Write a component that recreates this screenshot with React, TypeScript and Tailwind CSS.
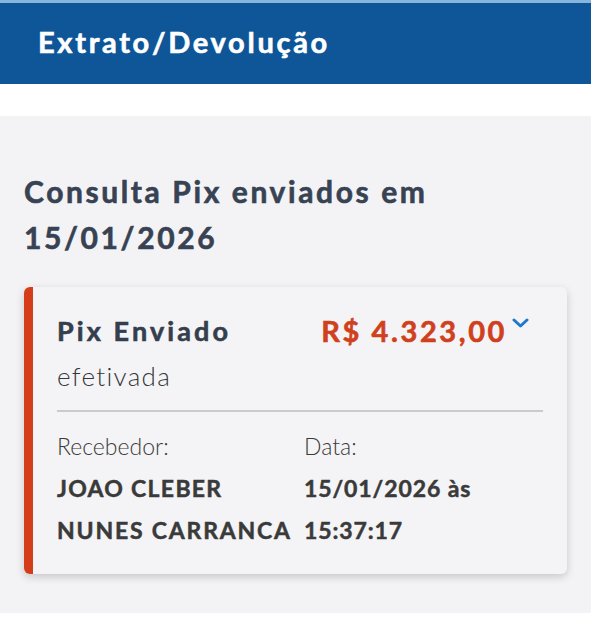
import React from "react";

export default function App() {
  return (
    <div className="w-[591px] h-[627px] bg-white overflow-hidden" style={{ fontFamily: "Lato, 'Open Sans', sans-serif" }}>
      <div className="h-[3px] bg-[#86b6dc]" />
      <div className="h-[81px] bg-[#0e5697] flex items-center px-[38px]">
        <h1 className="text-white font-bold text-[29px] leading-none tracking-[2.7px] -mt-[4px] [-webkit-text-stroke:0.6px_currentColor]">Extrato/Devolução</h1>
      </div>
      <div className="h-[32px] bg-white" />
      <div className="bg-[#f3f3f5] px-[24px] pt-[52px] pb-[39px]">
        <h2 className="text-[#374253] font-bold text-[30px] leading-[46px] tracking-[2.6px] [-webkit-text-stroke:0.6px_currentColor]">
          Consulta Pix enviados em
          <br />
          15/01/2026
        </h2>
        <div className="mt-[27px] w-[543px] rounded-[6px] border-l-[9px] border-[#d43c1a] bg-[#f4f4f6] shadow-[0_3px_8px_rgba(0,0,0,0.18)] pl-[24px] pr-[24px] pt-[26px] pb-[23px]">
          <div className="flex justify-between items-start">
            <span className="text-[#343e4d] font-bold text-[27px] leading-[36px] tracking-[3.1px] [-webkit-text-stroke:0.6px_currentColor]">Pix Enviado</span>
            <div className="flex items-start mr-[14px]">
              <span className="text-[#d0401c] font-bold text-[29px] leading-[36px] tracking-[2.6px] [-webkit-text-stroke:0.6px_currentColor]">R$ 4.323,00</span>
              <svg className="ml-[5px] mt-[5px]" width="17" height="11" viewBox="0 0 17 11">
                <path d="M2 2 L8.5 8 L15 2" fill="none" stroke="#1e78cc" strokeWidth="3" strokeLinecap="round" strokeLinejoin="round" />
              </svg>
            </div>
          </div>
          <div className="mt-[9px] text-[#363636] font-light text-[26px] leading-[36px] tracking-[1.3px]">efetivada</div>
          <div className="mt-[16px] h-[2px] bg-[#cbcbcd]" />
          <div className="mt-[16px] grid grid-cols-[247px_1fr] text-[#3a3a3a]">
            <div>
              <div className="font-light text-[23px] leading-[36px]">Recebedor:</div>
              <div className="font-bold text-[23px] leading-[42px] mt-[3px] [-webkit-text-stroke:0.5px_currentColor]">
                <div className="tracking-[1.3px]">JOAO CLEBER</div>
                <div className="tracking-[1.8px]">NUNES CARRANCA</div>
              </div>
            </div>
            <div>
              <div className="font-light text-[23px] leading-[36px]">Data:</div>
              <div className="font-bold text-[23px] leading-[42px] mt-[3px] tracking-[0.9px] [-webkit-text-stroke:0.5px_currentColor]">
                <div>15/01/2026 às</div>
                <div>15:37:17</div>
              </div>
            </div>
          </div>
        </div>
      </div>
    </div>
  );
}
